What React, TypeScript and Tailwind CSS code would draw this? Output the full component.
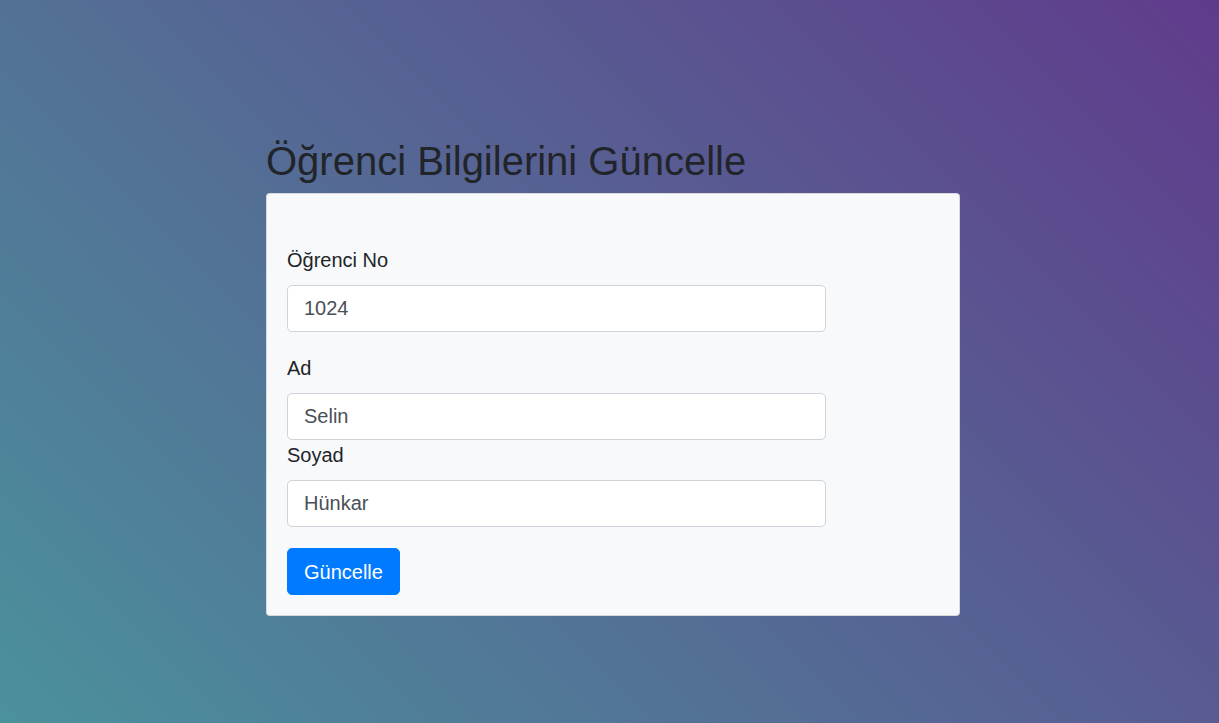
import { useState } from "react";

const fields = [
  { id: "no", label: "Öğrenci No", value: "1024", gap: "mb-[21px]" },
  { id: "ad", label: "Ad", value: "Selin", gap: "mb-0" },
  { id: "soyad", label: "Soyad", value: "Hünkar", gap: "mb-[21px]" },
];

const App = () => {
  const [values, setValues] = useState<Record<string, string>>(
    Object.fromEntries(fields.map((f) => [f.id, f.value]))
  );

  return (
    <div className="min-h-[723px] w-full bg-[linear-gradient(45deg,#4b919c,#603b8c)] font-['Liberation_Sans',Arial,sans-serif] text-[#212529]">
      <div className="pt-[137px] pl-[266px]">
        <h1 className="mb-2 text-[40px] leading-[48px] font-normal">
          Öğrenci Bilgilerini Güncelle
        </h1>

        <form
          onSubmit={(e) => e.preventDefault()}
          className="w-[694px] rounded border border-black/[0.125] bg-[#f8f9fa] px-5 pt-[51px] pb-5"
        >
          {fields.map((f) => (
            <div key={f.id} className={f.gap}>
              <label
                htmlFor={f.id}
                className="mb-[10px] block text-[20px] leading-[30px]"
              >
                {f.label}
              </label>
              <input
                id={f.id}
                type="text"
                value={values[f.id]}
                onChange={(e) =>
                  setValues({ ...values, [f.id]: e.target.value })
                }
                className="block h-[47px] w-[539px] rounded-[5px] border border-[#ced4da] bg-white px-4 text-[20px] text-[#495057] outline-none focus:border-[#80bdff]"
              />
            </div>
          ))}

          <button
            type="submit"
            className="h-[47px] cursor-pointer rounded-[5px] border border-[#007bff] bg-[#007bff] px-4 text-[20px] text-white hover:bg-[#0069d9]"
          >
            Güncelle
          </button>
        </form>
      </div>
    </div>
  );
};

export default App;
